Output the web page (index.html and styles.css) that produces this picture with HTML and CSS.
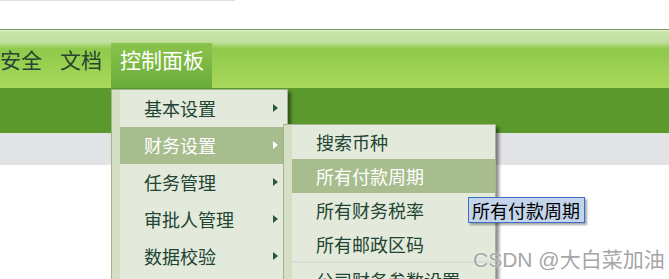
FILE: index.html
```html
<!DOCTYPE html>
<html lang="zh-CN">
<head>
  <meta charset="UTF-8">
  <title>控制面板</title>
  <meta name="viewport" content="width=device-width, initial-scale=1">
  <link rel="stylesheet" href="styles.css">
</head>
<body>
<div class="topline"></div>

<div class="header">
  <ul class="nav">
    <li>安全</li>
    <li>文档</li>
    <li class="active">控制面板</li>
  </ul>
</div>
<div class="subbar"></div>
<div class="graybar"></div>

<ul class="menu menu-main">
  <li class="has-sub">基本设置</li>
  <li class="has-sub hover">财务设置</li>
  <li class="has-sub">任务管理</li>
  <li class="has-sub">审批人管理</li>
  <li class="has-sub">数据校验</li>
</ul>

<ul class="menu menu-sub">
  <li>搜索币种</li>
  <li class="hover">所有付款周期</li>
  <li>所有财务税率</li>
  <li>所有邮政区码</li>
  <li class="sep"></li>
  <li>公司财务参数设置</li>
</ul>

<div class="tooltip">所有付款周期</div>
<div class="watermark">CSDN @大白菜加油</div>
</body>
</html>
```

FILE: styles.css
```css
html, body { margin: 0; height: 279px; overflow: hidden; }
body { font-family: "Noto Sans CJK SC", "Noto Sans", sans-serif; background: #fff; position: relative; }

.topline { width: 235px; height: 1px; background: #dedede; margin-bottom: 28px; }

.header {
  border-top: 1px solid #7a9d56;
  height: 58px;
  background: linear-gradient(to bottom, #e4f1d7 0, #c9e5aa 2px, #c1e09f 12px, #94cb52 18px, #8fca4b 20px, #aad95c 58px);
}
.nav { display: flex; list-style: none; margin: 0 0 0 -9px; padding: 0; }
.nav li { height: 58px; box-sizing: border-box; padding: 17px 9px 0; font-size: 21px; line-height: 25px; color: #25452f; }
.nav li.active {
  padding: 17px 8px 0 9px;
  color: #fff;
  background: linear-gradient(to bottom, transparent 13px, #8ac34c 13px, #6aac3a 58px);
}

.subbar { height: 45px; background: #5b992d; }
.graybar { height: 32px; background: #e2e3e5; }

.menu {
  position: absolute;
  list-style: none;
  margin: 0;
  padding: 0 0 40px;
  border: 1px solid #a2b58f;
  background: linear-gradient(to right, #d4dfc4 0, #d4dfc4 8px, #e3eadb 8px);
  box-shadow: 3px 3px 3px rgba(0, 0, 0, .45);
  font-size: 18px;
  color: #214433;
}
.menu li { position: relative; margin-left: 8px; padding-left: 24px; white-space: nowrap; }
.menu li.hover { background: #a7bd8d; color: #fff; }

.menu-main { left: 111px; top: 89px; width: 175px; }
.menu-main li { height: 37px; line-height: 37px; }
.menu-main .has-sub::after {
  content: "";
  position: absolute;
  right: 9px;
  top: 14px;
  border-left: 5px solid #2b5638;
  border-top: 4px solid transparent;
  border-bottom: 4px solid transparent;
}
.menu-main .hover::after { border-left-color: #fff; }

.menu-sub { left: 283px; top: 124px; width: 211px; }
.menu-sub li { height: 34px; line-height: 34px; }
.menu-sub li.sep { height: 2px; margin-left: 7px; padding: 0; background: #d9ddd8; }

.tooltip {
  position: absolute;
  left: 468px;
  top: 197px;
  width: 109px;
  height: 24px;
  padding: 0 3px;
  border: 1px solid #3a6fc6;
  background: #c3d4eb;
  box-shadow: 2px 2px 2px rgba(0, 0, 0, .35);
  font-size: 18px;
  line-height: 24px;
  color: #000;
  white-space: nowrap;
}

.watermark {
  position: absolute;
  left: 473px;
  top: 248px;
  font-family: "Liberation Sans", "Noto Sans CJK SC", sans-serif;
  font-size: 21px;
  line-height: 24px;
  color: #a6a6a6;
  text-shadow: 0 0 2px #fff;
  white-space: nowrap;
}
```
